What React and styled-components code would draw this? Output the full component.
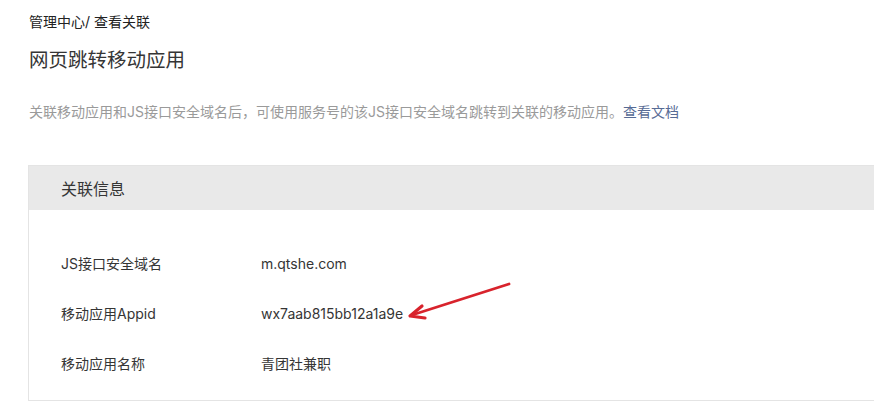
import React from "react";
import styled, { createGlobalStyle } from "styled-components";

const Global = createGlobalStyle`
  html, body { margin: 0; padding: 0; background: #fff; overflow: hidden; }
  body { font-family: Inter, "Noto Sans CJK SC", sans-serif; color: #353535; }
`;

const Page = styled.div`
  width: 874px;
  height: 407px;
  overflow: hidden;
  padding: 12px 0 0 29px;
  box-sizing: border-box;
`;

const Breadcrumb = styled.div`
  font-size: 14px;
  line-height: 20px;
  color: #222;
`;

const Title = styled.h1`
  margin: 14px 0 0;
  font-size: 19.5px;
  line-height: 28px;
  font-weight: 400;
  color: #353535;
`;

const Desc = styled.p`
  margin: 28px 0 0;
  font-size: 14px;
  line-height: 20px;
  color: #9a9a9a;
`;

const Link = styled.a`
  color: #576b95;
  text-decoration: none;
`;

const Card = styled.section`
  margin: 43px 0 0 -1px;
  width: 900px;
  border: 1px solid #e4e4e4;
  box-sizing: border-box;
`;

const CardHeader = styled.div`
  height: 44px;
  background: #e9e9e9;
  display: flex;
  align-items: center;
  padding-left: 32px;
  font-size: 16px;
  color: #353535;
`;

const CardBody = styled.div`
  position: relative;
  padding: 28px 0 12px 32px;
  display: flex;
  flex-direction: column;
`;

const Row = styled.div`
  display: grid;
  grid-template-columns: 200px 1fr;
  height: 50px;
  align-items: center;
  font-size: 14px;
  color: #353535;
`;

const Label = styled.span``;
const Value = styled.span``;

const Arrow = styled.svg`
  position: absolute;
  left: 341px;
  top: 60px;
  overflow: visible;
`;

const rows = [
  ["JS接口安全域名", "m.qtshe.com"],
  ["移动应用Appid", "wx7aab815bb12a1a9e"],
  ["移动应用名称", "青团社兼职"],
];

export default function App() {
  return (
    <>
      <Global />
      <Page>
        <Breadcrumb>管理中心/ 查看关联</Breadcrumb>
        <Title>网页跳转移动应用</Title>
        <Desc>
          关联移动应用和JS接口安全域名后，可使用服务号的该JS接口安全域名跳转到关联的移动应用。
          <Link href="#">查看文档</Link>
        </Desc>
        <Card>
          <CardHeader>关联信息</CardHeader>
          <CardBody>
            {rows.map(([k, v]) => (
              <Row key={k}>
                <Label>{k}</Label>
                <Value>{v}</Value>
              </Row>
            ))}
            <Arrow width="150" height="50" viewBox="0 0 150 50">
              <g stroke="#d8232c" strokeWidth="2.8" strokeLinecap="round" fill="none">
                <path d="M139 14 L42 45" />
                <path d="M52 36 L40 46 L55 48" strokeLinejoin="round" strokeWidth="3.2" />
              </g>
            </Arrow>
          </CardBody>
        </Card>
      </Page>
    </>
  );
}
